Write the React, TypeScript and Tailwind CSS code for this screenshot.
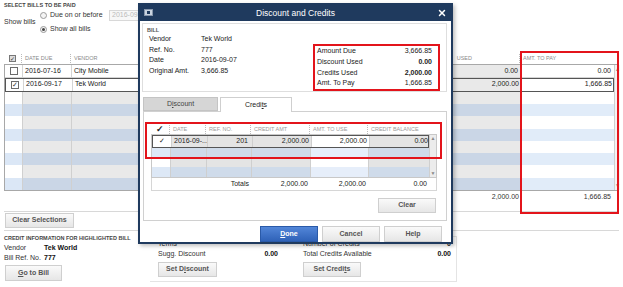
import { X } from "lucide-react";

const STRIPES = [0, 1, 2, 3, 4, 5, 6, 7];

function Box({ checked, className = "" }: { checked?: boolean; className?: string }) {
  return (
    <span
      className={`inline-flex items-center justify-center w-[8px] h-[8px] border border-[#6b6b6b] bg-white text-[7px] leading-none text-[#333] ${className}`}
    >
      {checked ? "✓" : ""}
    </span>
  );
}

function Radio({ on }: { on?: boolean }) {
  return (
    <span className="inline-flex items-center justify-center w-[7px] h-[7px] rounded-full border border-[#9a9a9a] bg-[#f4f4f4]">
      {on && <span className="w-[3px] h-[3px] rounded-full bg-[#444]" />}
    </span>
  );
}

function Btn({ children, className = "" }: { children: React.ReactNode; className?: string }) {
  return (
    <div
      className={`flex items-center justify-center h-[15px] border border-[#cfcfcf] bg-gradient-to-b from-[#fafafa] to-[#e6e6e6] text-[7px] font-bold text-[#555] ${className}`}
    >
      {children}
    </div>
  );
}

function BillsTable() {
  return (
    <div className="relative px-[4px]">
      {/* header */}
      <div className="grid grid-cols-[17px_49px_130px_220px_99px_94px_7px] h-[11px] items-center text-[5.5px] text-[#8a8a8a]">
        <div className="flex justify-center">
          <span className="inline-flex items-center justify-center w-[7px] h-[7px] border border-[#777] bg-[#ddd] text-[6px] leading-none text-[#333]">✓</span>
        </div>
        <div className="border-l border-dotted border-[#bbb] pl-[3px]">DATE DUE</div>
        <div className="border-l border-dotted border-[#bbb] pl-[3px]">VENDOR</div>
        <div className="border-l border-dotted border-[#bbb] pl-[3px]" />
        <div className="border-l border-dotted border-[#bbb] pl-[3px] text-right pr-[47px]">USED</div>
        <div className="border-l border-dotted border-[#bbb] pl-[3px]">AMT. TO PAY</div>
        <div />
      </div>

      {/* body */}
      <div className="flex border border-[#a8a8a8] h-[127px] text-[7px] text-[#222]">
        <div className="flex flex-col w-[609px]">
          <div className="grid grid-cols-[17px_49px_130px_220px_99px_94px] h-[13px] items-center bg-white border-b border-[#d4d4d4]">
            <div className="flex justify-center"><Box /></div>
            <div className="pl-[2px] h-full flex items-center border-l border-[#d4d4d4]">2016-07-16</div>
            <div className="pl-[2px] h-full flex items-center border-l border-[#d4d4d4]">City Mobile</div>
            <div className="h-full border-l border-[#d4d4d4]" />
            <div className="h-full flex items-center justify-end pr-[2px] bg-[#e9e9e9] border-l border-[#d4d4d4]">0.00</div>
            <div className="h-full flex items-center justify-end pr-[3px] border-l border-[#d4d4d4]">0.00</div>
          </div>
          <div className="grid grid-cols-[17px_49px_130px_220px_99px_94px] h-[14px] items-center bg-white border border-[#555]">
            <div className="flex justify-center"><Box checked /></div>
            <div className="pl-[2px] h-full flex items-center border-l border-[#d4d4d4]">2016-09-17</div>
            <div className="pl-[2px] h-full flex items-center border-l border-[#d4d4d4]">Tek World</div>
            <div className="h-full border-l border-[#d4d4d4]" />
            <div className="h-full flex items-center justify-end pr-[2px] bg-[#e9e9e9] border-l border-[#d4d4d4]">2,000.00</div>
            <div className="h-full flex items-center justify-end pr-[3px] border-l border-[#d4d4d4]">1,666.85</div>
          </div>
          {STRIPES.map((i) => (
            <div key={i} className="grid grid-cols-[17px_49px_130px_220px_99px_94px] h-[12.5px]">
              <div className={i % 2 === 0 ? "bg-white" : "bg-[#dbe7f6]"} />
              <div className={`border-l border-[#d0d0d0] ${i % 2 === 0 ? "bg-[#e9e9e9]" : "bg-[#cad6e6]"}`} />
              <div className={`border-l border-[#d0d0d0] ${i % 2 === 0 ? "bg-[#e9e9e9]" : "bg-[#cad6e6]"}`} />
              <div className={`border-l border-[#d0d0d0] ${i % 2 === 0 ? "bg-[#e9e9e9]" : "bg-[#cad6e6]"}`} />
              <div className={`border-l border-[#d0d0d0] ${i % 2 === 0 ? "bg-[#e9e9e9]" : "bg-[#cad6e6]"}`} />
              <div className={`border-l border-[#d0d0d0] ${i % 2 === 0 ? "bg-white" : "bg-[#e1ecf9]"}`} />
            </div>
          ))}
        </div>
        <div className="flex-1 flex flex-col justify-between items-center bg-[#f3f3f3] border-l border-[#d0d0d0] text-[5px] text-[#888] py-[1px]">
          <span>▲</span>
          <span>▼</span>
        </div>
      </div>

      {/* totals */}
      <div className="flex h-[12px] items-center text-[7px] text-[#333]">
        <div className="w-[515px] text-right">2,000.00</div>
        <div className="w-[92px] text-right">1,666.85</div>
      </div>

      {/* highlight */}
      <div className="absolute left-[520px] top-[-2px] w-[99px] h-[163px] border-2 border-[#e3141b]" />
    </div>
  );
}

function Dialog() {
  return (
    <div className="absolute left-[138px] top-[3px] w-[315px] h-[241px] border-2 border-[#1f3a5e] bg-white flex flex-col shadow-[2px_2px_4px_rgba(0,0,0,0.25)]">
      {/* title bar */}
      <div className="relative h-[16px] bg-[#1f3a5e] flex items-center justify-center text-white text-[8.5px]">
        <span className="absolute left-[4px] top-[4px] w-[9px] h-[7px] bg-[#c9d3e0] border border-[#8796ab] flex items-center justify-center">
          <span className="w-[3px] h-[3px] bg-[#1f3a5e]" />
        </span>
        <span>Discount and Credits</span>
        <X className="absolute right-[4px] top-[3px] w-[10px] h-[10px]" strokeWidth={3.5} />
      </div>

      <div className="flex-1 flex flex-col pl-[2px] pr-[4px] text-[7px] text-[#222]">
        {/* bill group */}
        <div className="mt-[2px] h-[69px] border border-[#dedede] flex flex-col">
          <div className="pt-[2px] pl-[4px] h-[10px] text-[5.5px] font-bold text-[#555] leading-[8px]">BILL</div>
          <div className="flex items-start">
            <div className="pl-[6px] flex flex-col">
              {[
                ["Vendor", "Tek World"],
                ["Ref. No.", "777"],
                ["Date", "2016-09-07"],
                ["Original Amt.", "3,666.85"],
              ].map(([k, v]) => (
                <div key={k} className="flex h-[10.6px] items-center">
                  <span className="w-[52px]">{k}</span>
                  <span>{v}</span>
                </div>
              ))}
            </div>
            <div className="ml-auto mr-[6px] mt-[10px] w-[127px] h-[47px] border-2 border-[#e3141b] px-[2px] flex flex-col justify-center">
              <div className="flex h-[10.6px] items-center justify-between">
                <span>Amount Due</span>
                <span className="pr-[4px]">3,666.85</span>
              </div>
              <div className="flex h-[10.6px] items-center justify-between">
                <span>Discount Used</span>
                <span className="pr-[4px] font-bold">0.00</span>
              </div>
              <div className="flex h-[10.6px] items-center justify-between">
                <span>Credits Used</span>
                <span className="pr-[4px] font-bold">2,000.00</span>
              </div>
              <div className="flex h-[10.6px] items-center justify-between">
                <span>Amt. To Pay</span>
                <span className="pr-[4px]">1,666.85</span>
              </div>
            </div>
          </div>
        </div>

        {/* tabs */}
        <div className="mt-[5px] flex items-end h-[14px] pl-[1px] gap-[2px]">
          <div className="w-[75px] h-[14px] bg-[#d6d6d6] border border-[#c4c4c4] flex items-center justify-center text-[#444]">
            D<span className="underline">i</span>scount
          </div>
          <div className="w-[72px] h-[15px] -mb-[1px] bg-white border border-[#cfcfcf] border-b-0 flex items-center justify-center relative z-10">
            Credi<span className="underline">t</span>s
          </div>
        </div>

        {/* panel */}
        <div className="relative ml-[1px] h-[110px] border border-[#d0d0d0] bg-white flex flex-col pl-[7px] pr-[9px] pt-[13px]">
          <div className="grid grid-cols-[18px_36px_45px_59px_58px_61px_9px] h-[9px] items-center text-[5.5px] text-[#9a9a9a]">
            <div className="text-center text-[9px] font-bold text-[#222] leading-none">✓</div>
            <div className="border-l border-dotted border-[#bbb] pl-[3px]">DATE</div>
            <div className="border-l border-dotted border-[#bbb] pl-[3px]">REF. NO.</div>
            <div className="border-l border-dotted border-[#bbb] pl-[3px]">CREDIT AMT</div>
            <div className="border-l border-dotted border-[#bbb] pl-[3px]">AMT. TO USE</div>
            <div className="border-l border-dotted border-[#bbb] pl-[3px]">CREDIT BALANCE</div>
            <div />
          </div>
          <div className="flex h-[44px] border border-[#c8c8c8] overflow-hidden">
            <div className="flex flex-col w-[277px]">
              <div className="grid grid-cols-[18px_36px_45px_59px_58px_61px] h-[13px] border border-[#555] bg-[#e4e4e4]">
                <div className="bg-white flex items-center justify-center text-[7px]">✓</div>
                <div className="flex items-center pl-[2px] border-l border-[#cfcfcf]">2016-09-...</div>
                <div className="flex items-center justify-end pr-[4px] border-l border-[#cfcfcf]">201</div>
                <div className="flex items-center justify-end pr-[2px] border-l border-[#cfcfcf]">2,000.00</div>
                <div className="flex items-center justify-end pr-[2px] border-l border-[#cfcfcf] bg-white">2,000.00</div>
                <div className="flex items-center justify-end pr-[2px] border-l border-[#cfcfcf]">0.00</div>
              </div>
              <div className="grid grid-cols-[18px_36px_45px_59px_58px_61px] h-[13px] bg-[#cfdbea]">
                <div className="bg-[#dde8f6]" />
                <div className="border-l border-[#cfcfcf]" />
                <div className="border-l border-[#cfcfcf]" />
                <div className="border-l border-[#cfcfcf]" />
                <div className="border-l border-[#cfcfcf] bg-[#e6eefa]" />
                <div className="border-l border-[#cfcfcf]" />
              </div>
              <div className="grid grid-cols-[18px_36px_45px_59px_58px_61px] h-[13px] bg-[#e4e4e4]">
                <div className="bg-white" />
                <div className="border-l border-[#cfcfcf]" />
                <div className="border-l border-[#cfcfcf]" />
                <div className="border-l border-[#cfcfcf]" />
                <div className="border-l border-[#cfcfcf] bg-white" />
                <div className="border-l border-[#cfcfcf]" />
              </div>
              <div className="grid grid-cols-[18px_36px_45px_59px_58px_61px] h-[13px] bg-[#cfdbea]">
                <div className="bg-[#dde8f6]" />
                <div className="border-l border-[#cfcfcf]" />
                <div className="border-l border-[#cfcfcf]" />
                <div className="border-l border-[#cfcfcf]" />
                <div className="border-l border-[#cfcfcf] bg-[#e6eefa]" />
                <div className="border-l border-[#cfcfcf]" />
              </div>
            </div>
            <div className="flex-1 flex flex-col justify-between items-center bg-[#ececec] border-l border-[#cfcfcf] text-[5px] text-[#888]">
              <span>▲</span>
              <span>▼</span>
            </div>
          </div>
          <div className="grid grid-cols-[99px_59px_58px_61px_9px] h-[13px] items-center border border-t-0 border-[#d6d6d6]">
            <div className="text-right pr-[2px]">Totals</div>
            <div className="text-right pr-[2px]">2,000.00</div>
            <div className="text-right pr-[2px]">2,000.00</div>
            <div className="text-right pr-[2px]">0.00</div>
            <div />
          </div>
          <Btn className="mt-[7px] self-end mr-[1px] w-[58px] h-[15px]">Clear</Btn>

          {/* highlight */}
          <div className="absolute left-[1px] top-[10px] w-[297px] h-[37px] border-2 border-[#e3141b]" />
        </div>

        {/* buttons */}
        <div className="mt-[5px] flex justify-end gap-[4px] pr-[5px]">
          <div className="w-[58px] h-[16px] flex items-center justify-center border border-[#2a5aa8] bg-gradient-to-b from-[#5286d8] to-[#2f62b8] text-white text-[7px] font-bold">
            <span className="underline">D</span>one
          </div>
          <Btn className="w-[58px] h-[16px]">Cancel</Btn>
          <Btn className="w-[58px] h-[16px]">Help</Btn>
        </div>
      </div>
    </div>
  );
}

export default function App() {
  return (
    <div className="relative w-[623px] h-[287px] overflow-hidden whitespace-nowrap bg-white font-['Liberation_Sans',Arial,sans-serif] text-[#222]">
      {/* filter section */}
      <div className="h-[53px] px-[4px] pt-[1px]">
        <div className="text-[5.5px] font-bold leading-[8px] text-[#444]">SELECT BILLS TO BE PAID</div>
        <div className="flex items-center mt-[1px] text-[7px] text-[#333]">
          <span className="w-[36px]">Show bills</span>
          <div className="flex flex-col gap-[4px]">
            <div className="flex items-center h-[10px] gap-[3px]">
              <Radio />
              <span className="w-[56px]">Due on or before</span>
              <span className="h-[11px] w-[40px] border border-[#d8d8d8] bg-[#f7f7f7] text-[#bbb] pl-[2px] flex items-center">2016-09-17</span>
            </div>
            <div className="flex items-center h-[10px] gap-[3px]">
              <Radio on />
              <span>Show all bills</span>
            </div>
          </div>
        </div>
      </div>

      <BillsTable />

      {/* clear selections */}
      <div className="mx-[4px] mt-[8px] border-t border-[#d8d8d8] pt-[1px] pb-[2px] border-b">
        <Btn className="ml-[1px] w-[69px] h-[15px]">Clear Selections</Btn>
      </div>

      {/* credit info */}
      <div className="flex px-[4px] pt-[3px] text-[7px] text-[#333]">
        <div className="w-[150px] flex flex-col">
          <div className="text-[5.5px] font-bold leading-[8px] text-[#444]">CREDIT INFORMATION FOR HIGHLIGHTED BILL</div>
          <div className="flex h-[10px] items-center mt-[1px]">
            <span className="w-[40px]">Vendor</span>
            <span className="font-bold text-[#111]">Tek World</span>
          </div>
          <div className="flex h-[10px] items-center">
            <span className="w-[40px]">Bill Ref. No.</span>
            <span className="font-bold text-[#111]">777</span>
          </div>
          <Btn className="mt-[2px] ml-[1px] w-[57px] h-[16px]">
            <span className="underline">G</span>o to Bill
          </Btn>
        </div>
        <div className="flex-1 -ml-[4px] mt-[2px] mr-[162px] h-[46px] border border-[#e4e4e4] border-l-0 flex pl-[8px]">
          <div className="w-[145px] flex flex-col pt-[2px]">
            <div className="flex h-[10px] items-center">Terms</div>
            <div className="w-[120px] flex h-[10px] items-center justify-between">
              <span>Sugg. Discount</span>
              <span className="font-bold text-[#111]">0.00</span>
            </div>
            <Btn className="mt-[3px] w-[59px] h-[15px]">
              Set D<span className="underline">i</span>scount
            </Btn>
          </div>
          <div className="flex-1 flex flex-col pt-[2px] pr-[5px]">
            <div className="flex h-[10px] items-center justify-between">
              <span>Number of Credits</span>
              <span className="font-bold text-[#111]">0</span>
            </div>
            <div className="flex h-[10px] items-center justify-between">
              <span>Total Credits Available</span>
              <span className="font-bold text-[#111]">0.00</span>
            </div>
            <Btn className="mt-[3px] w-[58px] h-[15px]">
              Set Credi<span className="underline">t</span>s
            </Btn>
          </div>
        </div>
      </div>

      <Dialog />
    </div>
  );
}
